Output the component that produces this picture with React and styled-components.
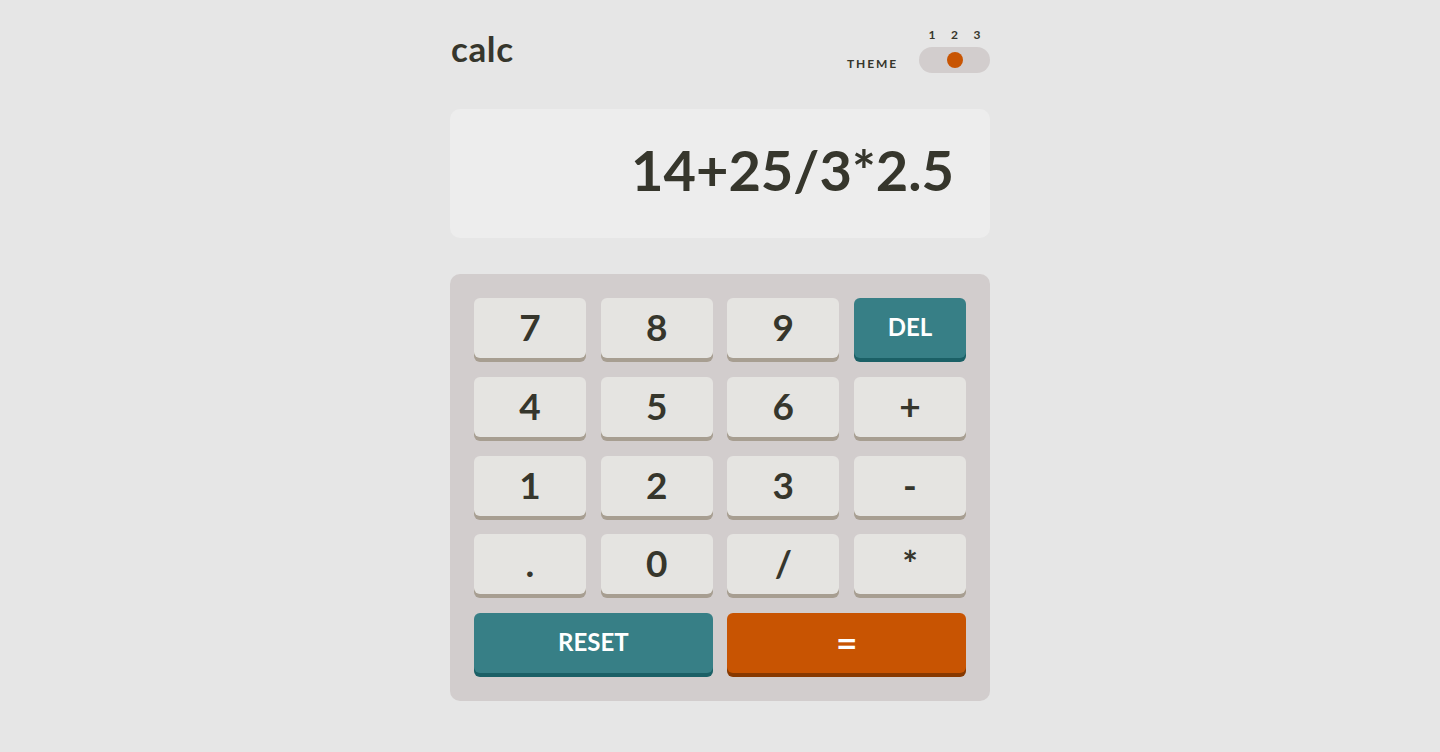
import React from 'react';
import styled, { createGlobalStyle } from 'styled-components';

const GlobalStyle = createGlobalStyle`
  * {
    box-sizing: border-box;
  }

  body {
    margin: 0;
    background: #e6e6e6;
    font-family: Lato, 'Noto Sans', sans-serif;
    color: #36362c;
  }
`;

const Calculator = styled.main`
  width: 540px;
  margin: 0 auto;
  padding-top: 29px;
`;

Calculator.Header = styled.header`
  display: flex;
  justify-content: space-between;
  align-items: flex-end;
  margin-bottom: 36px;
`;

Calculator.Logo = styled.h1`
  margin: 0 0 7px 1px;
  font-size: 35px;
  line-height: 1;
  font-weight: 700;
  letter-spacing: 0.6px;
`;

const Theme = styled.div`
  display: flex;
  align-items: flex-end;
  gap: 21px;
`;

Theme.Label = styled.span`
  font-size: 12px;
  line-height: 12px;
  font-weight: 700;
  letter-spacing: 1.9px;
  margin-bottom: 3px;
`;

Theme.Switch = styled.div`
  display: flex;
  flex-direction: column;
`;

Theme.Numbers = styled.div`
  display: grid;
  grid-template-columns: repeat(3, 16px);
  justify-content: space-between;
  padding: 0 5px;
  margin-bottom: 6px;
  font-size: 12px;
  line-height: 12px;
  font-weight: 700;
  text-align: center;
`;

Theme.Track = styled.div`
  width: 71px;
  height: 26px;
  padding: 5px;
  border-radius: 13px;
  background: #d2cdcd;
  display: flex;
  justify-content: ${({ $position }) => ['flex-start', 'center', 'flex-end'][$position - 1]};
`;

Theme.Knob = styled.span`
  width: 16px;
  height: 16px;
  border-radius: 50%;
  background: #c85402;
`;

const Screen = styled.output`
  display: flex;
  align-items: center;
  justify-content: flex-end;
  height: 129px;
  padding: 0 36px 8px 32px;
  margin-bottom: 36px;
  border-radius: 10px;
  background: #ededed;
  font-size: 56px;
  font-weight: 700;
  letter-spacing: 0;
`;

const Keypad = styled.div`
  display: grid;
  grid-template-columns: repeat(4, 1fr);
  grid-auto-rows: 60px;
  column-gap: 14.67px;
  row-gap: 18.75px;
  padding: 24px 24px 28px;
  border-radius: 10px;
  background: #d2cdcd;
`;

const variants = {
  plain: { bg: '#e5e4e1', shadow: '#a79e91', color: '#36362c', size: '37px' },
  accent: { bg: '#377f86', shadow: '#1b6066', color: '#ffffff', size: '24px' },
  equals: { bg: '#c85402', shadow: '#873901', color: '#ffffff', size: '37px' },
};

const Key = styled.button`
  grid-column: span ${({ $wide }) => ($wide ? 2 : 1)};
  display: flex;
  align-items: center;
  justify-content: center;
  padding: 0 0 3px;
  border: none;
  border-radius: 6px;
  font-family: inherit;
  font-weight: 700;
  font-size: ${({ $variant }) => variants[$variant].size};
  color: ${({ $variant }) => variants[$variant].color};
  background: ${({ $variant }) => variants[$variant].bg};
  box-shadow: 0 4px 0 ${({ $variant }) => variants[$variant].shadow};
  cursor: pointer;
`;

const keys = [
  { label: '7' }, { label: '8' }, { label: '9' }, { label: 'DEL', variant: 'accent' },
  { label: '4' }, { label: '5' }, { label: '6' }, { label: '+' },
  { label: '1' }, { label: '2' }, { label: '3' }, { label: '-' },
  { label: '.' }, { label: '0' }, { label: '/' }, { label: '*' },
  { label: 'RESET', variant: 'accent', wide: true },
  { label: '=', variant: 'equals', wide: true },
];

const App = () => {
  return (
    <>
      <GlobalStyle />
      <Calculator>
        <Calculator.Header>
          <Calculator.Logo>calc</Calculator.Logo>
          <Theme>
            <Theme.Label>THEME</Theme.Label>
            <Theme.Switch>
              <Theme.Numbers>
                <span>1</span>
                <span>2</span>
                <span>3</span>
              </Theme.Numbers>
              <Theme.Track $position={2}>
                <Theme.Knob />
              </Theme.Track>
            </Theme.Switch>
          </Theme>
        </Calculator.Header>
        <Screen>14+25/3*2.5</Screen>
        <Keypad>
          {keys.map(({ label, variant = 'plain', wide }) => (
            <Key key={label} $variant={variant} $wide={wide}>
              {label}
            </Key>
          ))}
        </Keypad>
      </Calculator>
    </>
  );
};

export { App as default };
